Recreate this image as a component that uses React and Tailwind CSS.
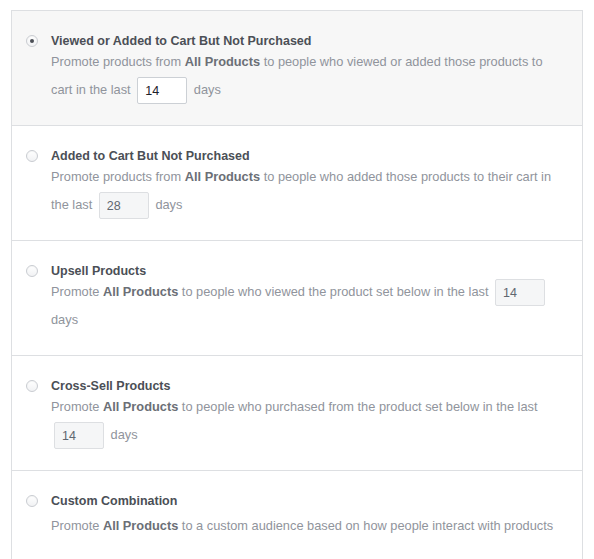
import React from 'react';

const options = [
  {
    id: 'viewed-added',
    title: 'Viewed or Added to Cart But Not Purchased',
    before: ['Promote products from ', 'All Products', ' to people who viewed or added those products to cart in the last'],
    days: 14,
  },
  {
    id: 'added',
    title: 'Added to Cart But Not Purchased',
    before: ['Promote products from ', 'All Products', ' to people who added those products to their cart in the last'],
    days: 28,
  },
  {
    id: 'upsell',
    title: 'Upsell Products',
    before: ['Promote ', 'All Products', ' to people who viewed the product set below in the last'],
    days: 14,
  },
  {
    id: 'cross-sell',
    title: 'Cross-Sell Products',
    before: ['Promote ', 'All Products', ' to people who purchased from the product set below in the last'],
    days: 14,
  },
  {
    id: 'custom',
    title: 'Custom Combination',
    before: ['Promote ', 'All Products', ' to a custom audience based on how people interact with products'],
    days: null,
  },
];

function Radio({ checked }) {
  return (
    <span className="mt-[1px] flex h-[12px] w-[12px] shrink-0 items-center justify-center rounded-full border border-[#c9ccd1] bg-gradient-to-b from-white to-[#f1f2f4] shadow-[inset_0_1px_1px_rgba(0,0,0,0.04)]">
      {checked && <span className="h-[4px] w-[4px] rounded-full bg-[#4b4f56]" />}
    </span>
  );
}

function DaysInput({ value, active }) {
  return (
    <input
      readOnly
      value={value}
      className={
        active
          ? 'mx-[3px] inline-block h-[27px] w-[50px] rounded-[2px] border border-[#ccd0d5] bg-white px-[7px] align-middle text-[12.5px] text-[#1d2129] outline-none'
          : 'mx-[3px] inline-block h-[27px] w-[50px] rounded-[2px] border border-[#dddfe2] bg-[#f5f6f7] px-[7px] align-middle text-[12.5px] text-[#606770] outline-none'
      }
    />
  );
}

export default function App() {
  const selected = 'viewed-added';

  return (
    <div className="min-h-[559px] bg-white pl-[11px] pt-[10px]" style={{ fontFamily: '"Liberation Sans", Arial, sans-serif' }}>
      <div className="w-[572px] border-x border-b border-[#dddfe2]">
        {options.map((opt) => {
          const isSel = opt.id === selected;
          return (
            <div
              key={opt.id}
              className={
                (isSel ? 'bg-[#f7f7f7] ' : 'bg-white ') +
                'flex h-[115px] gap-[13px] border-t border-[#dddfe2] pl-[14px] pr-[20px] pt-[23px]'
              }
            >
              <Radio checked={isSel} />
              <div className="min-w-0 flex-1">
                <div className="text-[12.5px] font-bold leading-[14px] text-[#4b4f56]">{opt.title}</div>
                <p className={(opt.days === null ? 'mt-[4px] ' : '') + 'text-[12.8px] leading-[28px] text-[#90949c]'}>
                  {opt.before[0]}
                  <span className="font-bold text-[#6b6f76]">{opt.before[1]}</span>
                  {opt.before[2]}
                  {opt.days !== null && (
                    <>
                      {' '}
                      <DaysInput value={opt.days} active={isSel} /> days
                    </>
                  )}
                </p>
              </div>
            </div>
          );
        })}
      </div>
    </div>
  );
}
